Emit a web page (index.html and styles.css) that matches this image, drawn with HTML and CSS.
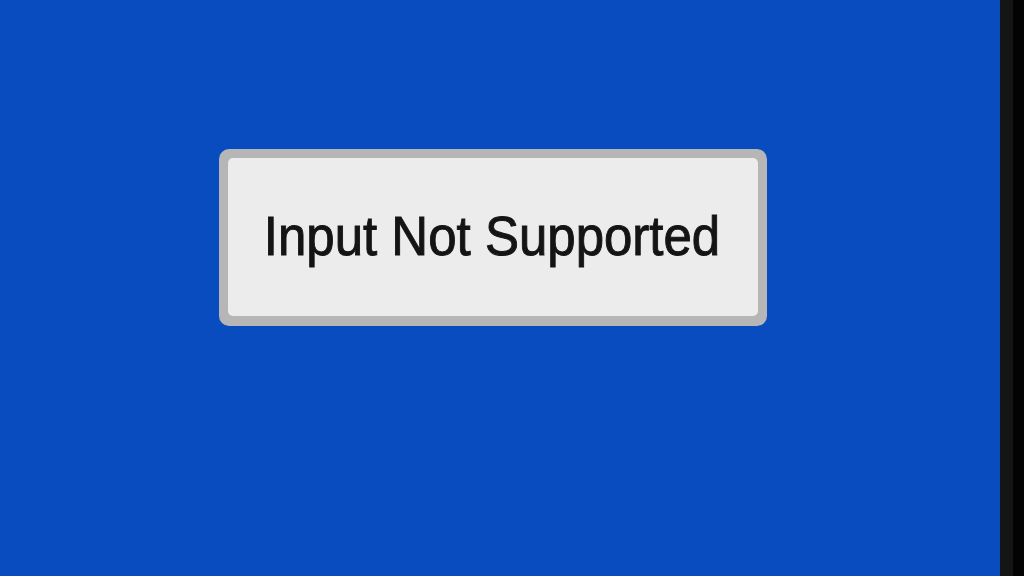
FILE: index.html
```html
<!DOCTYPE html>
<html>
<head>
<meta charset="utf-8">
<link rel="stylesheet" href="styles.css">
</head>
<body>
<div class="screen">
  <main class="display">
    <div class="dialog">
      <div class="dialog-inner">
        <span class="message">Input Not Supported</span>
      </div>
    </div>
  </main>
  <div class="bezel"></div>
  <div class="edge"></div>
</div>
</body>
</html>
```
FILE: styles.css
```css
html, body {
  margin: 0;
  padding: 0;
  width: 1024px;
  height: 576px;
  overflow: hidden;
  background: #000;
}
.screen {
  display: flex;
  width: 1024px;
  height: 576px;
}
.display {
  width: 1000px;
  height: 576px;
  background: #084cbf;
  padding: 149px 0 0 219px;
  box-sizing: border-box;
}
.dialog {
  width: 548px;
  height: 177px;
  box-sizing: border-box;
  background: #b6b6b6;
  border-radius: 10px;
  padding: 9px 9px 10px 9px;
}
.dialog-inner {
  height: 100%;
  background: #ececec;
  border-radius: 5px;
  display: flex;
  align-items: center;
  justify-content: center;
}
.message {
  display: inline-block;
  font-family: "Liberation Sans", Arial, sans-serif;
  font-size: 51px;
  color: #141414;
  -webkit-text-stroke: 0.9px #141414;
  transform: scaleY(1.07);
  margin-top: -1px;
  margin-left: -2px;
}
.bezel {
  width: 13px;
  background: #151515;
}
.edge {
  flex: 1;
  background: #030303;
}
```
